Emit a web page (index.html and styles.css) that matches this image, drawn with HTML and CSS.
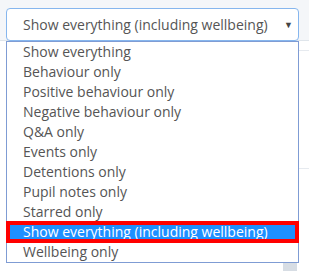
FILE: index.html
```html
<!DOCTYPE html>
<html lang="en">

<head>
	<meta charset="UTF-8">
	<meta name="viewport" content="width=device-width, initial-scale=1.0">
	<title>Timeline filter</title>
	<link rel="stylesheet" href="styles.css">
</head>

<body>

	<div class="filter-bar">
		<div class="filter-picker">
			<div class="filter-select">
				<span class="filter-value">Show everything (including wellbeing)</span>
				<span class="filter-arrow">&#9660;</span>
			</div>
			<ul class="filter-options">
				<li>Show everything</li>
				<li>Behaviour only</li>
				<li>Positive behaviour only</li>
				<li>Negative behaviour only</li>
				<li>Q&amp;A only</li>
				<li>Events only</li>
				<li>Detentions only</li>
				<li>Pupil notes only</li>
				<li>Starred only</li>
				<li class="selected">Show everything (including wellbeing)</li>
				<li>Wellbeing only</li>
			</ul>
		</div>
	</div>

	<div class="timeline">
		<div class="timeline-row"></div>
		<div class="timeline-row"></div>
		<div class="timeline-foot">
			<div class="scroll-thumb"></div>
		</div>
	</div>

</body>

</html>
```

FILE: styles.css
```css
body {
	margin: 0;
	background-color: #ffffff;
	font-family: 'Open Sans', sans-serif;
	color: #555;
}

.filter-bar {
	height: 41px;
	padding: 8px 10px 0 6px;
	box-sizing: border-box;
	background-color: #f4f6f9;
	border-bottom: 1px solid #dfe5eb;
}

.filter-picker {
	position: relative;
	z-index: 2;
}

.filter-select {
	display: flex;
	align-items: center;
	justify-content: space-between;
	height: 33px;
	padding: 0 5px 0 16px;
	box-sizing: border-box;
	background-color: #fff;
	border: 1px solid #86b6ee;
	border-radius: 4px;
	font-size: 14px;
}

.filter-arrow {
	font-size: 9px;
	color: #444;
}

.filter-options {
	position: absolute;
	top: 33px;
	left: 0;
	right: 0;
	margin: 0;
	padding: 0;
	list-style: none;
	background-color: #fff;
	border: 1px solid #7f9cd4;
	font-size: 14px;
}

.filter-options li {
	height: 20px;
	line-height: 20px;
	padding-left: 16px;
	white-space: nowrap;
}

.filter-options li.selected {
	background-color: #1e90ff;
	color: #fff;
	outline: 4px solid #ff0000;
	outline-offset: -3px;
}

.timeline {
	padding-left: 6px;
}

.timeline-row {
	height: 9px;
	border-bottom: 1px solid #e6eaef;
}

.timeline-row + .timeline-row {
	height: 117px;
}

.timeline-foot {
	display: flex;
	justify-content: flex-end;
	padding: 94px 12px 0 0;
}

.scroll-thumb {
	width: 14px;
	height: 10px;
	background-color: #d7dde4;
}
```
